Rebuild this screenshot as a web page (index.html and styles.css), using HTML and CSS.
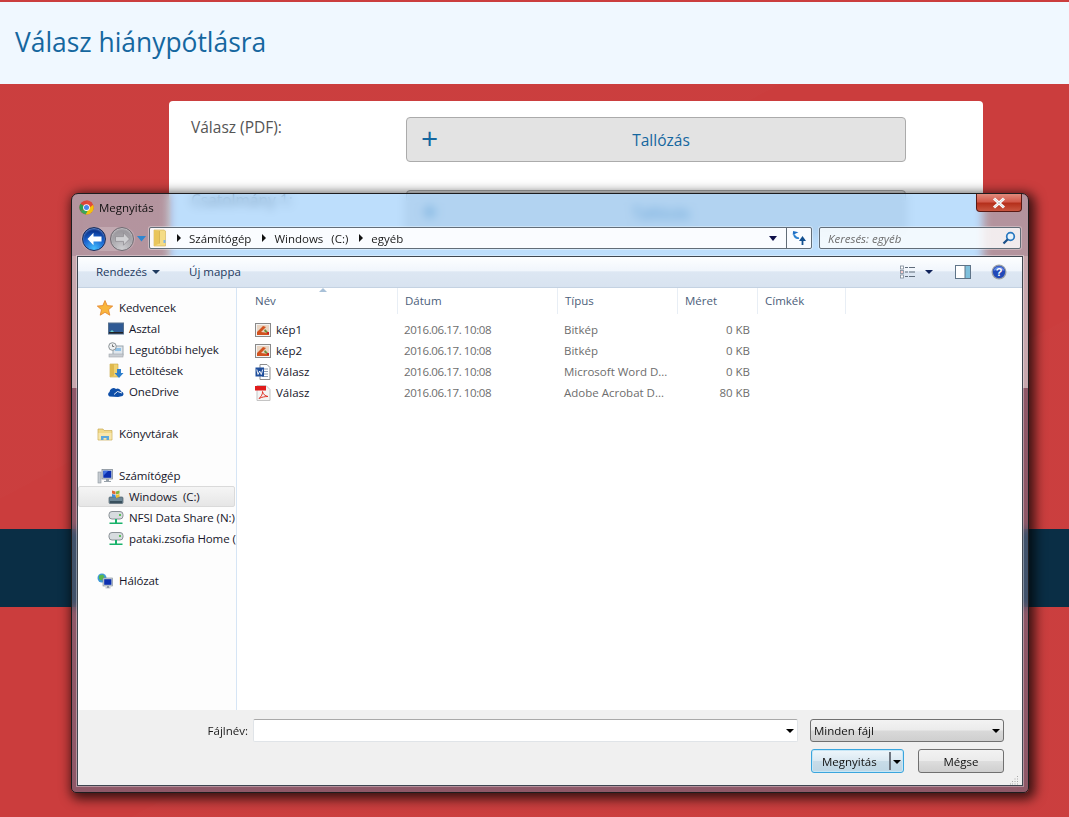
FILE: index.html
```html
<!DOCTYPE html>
<html lang="hu">
<head>
<meta charset="utf-8">
<title>Válasz hiánypótlásra</title>
<link rel="stylesheet" href="styles.css">
</head>
<body>
<header class="page-head"><h1>Válasz hiánypótlásra</h1></header>
<main class="page-main">
  <section class="card">
    <div class="form-row">
      <label class="form-label">Válasz (PDF):</label>
      <div class="browse"><span class="browse-plus">+</span><span class="browse-text">Tallózás</span></div>
    </div>
    <div class="form-row">
      <label class="form-label">Csatolmány 1:</label>
      <div class="browse"><span class="browse-plus">+</span><span class="browse-text">Tallózás</span></div>
    </div>
  </section>
  <div class="band"></div>
</main>

<div class="win">
  <div class="titlebar">
    <svg class="ico-title" viewBox="0 0 16 16"><circle cx="8" cy="8" r="7.500" fill="#db4437"/><path d="M8 8 1.500 11.800A7.500 7.500 0 0 1 1.600 4Z" fill="#2e9e4f"/><path d="M8 .5A7.500 7.500 0 0 1 14.900 11L8 8.500 8 .5Z" fill="#e04a3a"/><path d="M15 5A7.500 7.500 0 0 1 7 15.400L9 10Z" fill="#f4c20d"/><path d="M1.600 12A7.500 7.500 0 0 0 7 15.400L10 10 5 10Z" fill="#3aa757"/><circle cx="8" cy="8" r="3.600" fill="#fff"/><circle cx="8" cy="8" r="2.700" fill="#4a86e8"/></svg>
    <span class="title-text">Megnyitás</span>
    <div class="close"><svg width="16" height="12" viewBox="0 0 16 12"><path d="M3 1.500 13 10.500M13 1.500 3 10.500" stroke="#fff" stroke-width="3"/><path d="M3 1.500 13 10.500M13 1.500 3 10.500" stroke="#cfd5d8" stroke-width="1"/></svg></div>
  </div>
  <div class="navrow">
    <div class="navbtns">
      <div class="navpill">
        <div class="navbtn navbtn-back"><svg width="17" height="14" viewBox="0 0 17 14"><path d="M7.500 .8 1.500 7 7.500 13.200V9.400h8V4.600h-8Z" fill="#fff"/></svg></div>
        <div class="navbtn navbtn-fwd"><svg width="17" height="14" viewBox="0 0 17 14"><path d="M9.500 .8 15.500 7 9.500 13.200V9.400h-8V4.600h8Z" fill="#cfcfd2" stroke="#8b888e" stroke-width=".7"/></svg></div>
      </div>
      <svg class="navcaret" width="9" height="6" viewBox="0 0 9 6"><path d="M0 0h9L4.500 5.500Z" fill="#2f86d0"/></svg>
    </div>
    <div class="address">
      <svg class="addr-folder" width="14" height="18" viewBox="0 0 14 18"><path d="M1 1h10l1.500 1v15H1Z" fill="#f5dc85" stroke="#d1b050" stroke-width=".6"/><path d="M1 1v16l5.500-2.500V2Z" fill="#e9c55a"/><path d="M6.500 2v12.500" stroke="#c9a440" stroke-width=".6"/><rect x="10.500" y="11" width="2" height="3" fill="#7fb5e6"/></svg>
      <span class="crumb-arrow"></span><span class="crumb">Számítógép</span>
      <span class="crumb-arrow"></span><span class="crumb">Windows&nbsp; (C:)</span>
      <span class="crumb-arrow"></span><span class="crumb">egyéb</span>
      <span class="flex-fill"></span>
      <span class="addr-caret"></span>
      <span class="refresh"><svg width="16" height="16" viewBox="0 0 16 16"><path d="M7 1.500 2 5.500 1.500 1.500Z" fill="#1f6fc4" transform="rotate(12 4 4)"/><path d="M3 4.500C4 8 6 8.500 8 8" fill="none" stroke="#2a80d0" stroke-width="1.800"/><path d="M11.500 6 15 11H8Z" fill="#14508f"/><path d="M11.500 10v5" stroke="#14508f" stroke-width="1.800"/></svg></span>
    </div>
    <div class="search">
      <span class="search-text">Keresés: egyéb</span>
      <svg width="14" height="14" viewBox="0 0 14 14"><circle cx="8.500" cy="5.500" r="3.800" fill="#e9f3fb" stroke="#2a78c0" stroke-width="1.700"/><path d="M5.800 8.200 1.500 12.500" stroke="#1b4f88" stroke-width="2.200"/></svg>
    </div>
  </div>

  <div class="client">
    <div class="toolbar">
      <span class="tool tool-org">Rendezés<span class="caret-s"></span></span>
      <span class="tool tool-new">Új mappa</span>
      <span class="flex-fill"></span>
      <svg class="tool-view" width="16" height="14" viewBox="0 0 16 14"><g fill="#fff" stroke="#7a8796" stroke-width=".8"><rect x=".5" y="1" width="3" height="3"/><rect x=".5" y="5.500" width="3" height="3"/><rect x=".5" y="10" width="3" height="3"/></g><rect x="1.500" y="6.500" width="1" height="1" fill="#d33"/><path d="M5 2.500h3M9 2.500h6M5 7h3M9 7h6M5 11.500h3M9 11.500h6" stroke="#5f6c7b"/></svg>
      <span class="caret-view"></span>
      <svg class="tool-pane" width="16" height="14" viewBox="0 0 16 14"><rect x=".5" y=".5" width="15" height="13" fill="#fff" stroke="#5f7488"/><rect x="10" y="1" width="5" height="12" fill="#7fc0dc"/><path d="M10 1v12" stroke="#5f7488"/></svg>
      <svg class="tool-help" width="16" height="16" viewBox="0 0 16 16"><circle cx="8" cy="8" r="7.500" fill="#9aa0a8"/><circle cx="8" cy="8" r="6.200" fill="#2148b8"/><path d="M2.500 7A5.600 5.600 0 0 1 13.500 7Q8 4.500 2.500 7Z" fill="#5f84e0"/><text x="8" y="12" class="help-q">?</text></svg>
    </div>

    <div class="panes">
      <nav class="side">
        <div class="side-group">
          <div class="side-head"><svg class="ico16" viewBox="0 0 16 16"><path d="M8 .5 10.200 5.600 15.700 6.100 11.500 9.700 12.800 15.200 8 12.300 3.200 15.200 4.500 9.700.3 6.100 5.800 5.600Z" fill="#f9b63c" stroke="#e2822a" stroke-width=".8"/></svg>Kedvencek</div>
          <div class="side-item"><svg class="ico16" viewBox="0 0 16 16"><rect x=".5" y="2" width="15" height="11" fill="#2f5a94" stroke="#56708e"/><path d="M1 11h14v1.500H1Z" fill="#222"/><path d="M2 11l2-2 2 2Z" fill="#6cc"/></svg>Asztal</div>
          <div class="side-item"><svg class="ico16" viewBox="0 0 16 16"><rect x="5" y="4" width="10" height="9" fill="#dfe6ec" stroke="#9aa5ad"/><rect x="7" y="6" width="6" height="3" fill="#8fc1e6"/><rect x="1" y="12" width="14" height="3" fill="#c9ced3" stroke="#a0a6ab" stroke-width=".6"/><circle cx="4.500" cy="4.500" r="3.800" fill="#eef0f1" stroke="#8c9296"/><path d="M4.500 2.500v2h1.700" fill="none" stroke="#555" stroke-width=".8"/></svg>Legutóbbi helyek</div>
          <div class="side-item"><svg class="ico16" viewBox="0 0 16 16"><path d="M2 1h8v13H2Z" fill="#f0d271" stroke="#c6a541" stroke-width=".6"/><path d="M2 1v13l4-1.500V1Z" fill="#dfb94e"/><path d="M9 6h4v4h2.500L11 15 6.500 10H9Z" fill="#2f7fcc"/></svg>Letöltések</div>
          <div class="side-item"><svg class="ico16" viewBox="0 0 16 16"><path d="M1.500 12.500a2.500 2.500 0 0 1 0-4.500 4 4 0 0 1 6.500-3 3.500 3.500 0 0 1 5 2.500 2.500 2.500 0 0 1 1.500 4.500l-4.500 1Z" fill="#0f4fa8"/><path d="M6 10.500 9.500 7.500 14 9" fill="none" stroke="#fff" stroke-width=".9"/></svg>OneDrive</div>
        </div>
        <div class="side-group">
          <div class="side-head"><svg class="ico16" viewBox="0 0 16 16"><path d="M1 3h5l1 1.500h8V14H1Z" fill="#f0d98a" stroke="#c8ab55" stroke-width=".7"/><path d="M1.500 7h13v6.500h-13Z" fill="#f7e6ad"/><path d="M4 14V10h8v4H9.500v-2h-3v2Z" fill="#5ba8dd"/></svg>Könyvtárak</div>
        </div>
        <div class="side-group">
          <div class="side-head"><svg class="ico16" viewBox="0 0 16 16"><rect x="1" y="4" width="3" height="11" fill="#c5cbd1" stroke="#8e979f" stroke-width=".6"/><rect x="5" y="1.500" width="10.500" height="9.500" fill="#cfd6dd" stroke="#76818c" stroke-width=".7"/><rect x="6.300" y="2.800" width="8" height="7" fill="#0b2fb0"/><path d="M6.300 2.800h5l-5 5Z" fill="#3f6fe0"/><path d="M9 11h3v2h2v1H7v-1h2Z" fill="#9aa3ab"/></svg>Számítógép</div>
          <div class="side-item side-item-sel"><svg class="ico16" viewBox="0 0 16 16"><rect x="1" y="8" width="14" height="6.500" rx="1" fill="#6e8796" stroke="#4f5f6a" stroke-width=".7"/><rect x="2" y="12" width="12" height="2" fill="#39505d"/><path d="M4 1.500l3.500 1v3L4 4.500Z" fill="#df6a32"/><path d="M8 2.500l3.500-1v3l-3.500 1Z" fill="#82b440"/><path d="M4 5l3.500 1v3L4 8Z" fill="#3f8ad8"/><path d="M8 6l3.500-1v3L8 9Z" fill="#f0c030"/></svg>Windows&nbsp; (C:)</div>
          <div class="side-item"><svg class="ico16" viewBox="0 0 16 16"><rect x="1" y="1.500" width="14" height="7.500" rx="3" fill="#d7dcdf" stroke="#8b9297"/><rect x="11" y="4" width="2" height="2" fill="#5ac05a"/><path d="M7 9h2v3.500h5.500V14H1.500v-1.500H7Z" fill="#19b36b"/></svg>NFSI Data Share (N:)</div>
          <div class="side-item"><svg class="ico16" viewBox="0 0 16 16"><rect x="1" y="1.500" width="14" height="7.500" rx="3" fill="#d7dcdf" stroke="#8b9297"/><rect x="11" y="4" width="2" height="2" fill="#5ac05a"/><path d="M7 9h2v3.500h5.500V14H1.500v-1.500H7Z" fill="#19b36b"/></svg>pataki.zsofia Home (P:)</div>
        </div>
        <div class="side-group">
          <div class="side-head"><svg class="ico16" viewBox="0 0 16 16"><circle cx="5" cy="5" r="4.500" fill="#3f9ad8"/><path d="M2 2.500 6 1.500 7.500 4 4.500 7.500 2 6Z" fill="#59b84a"/><rect x="6" y="5" width="9.500" height="8" fill="#c9d2da" stroke="#7b8792" stroke-width=".6"/><rect x="7.200" y="6.200" width="7.200" height="5.600" fill="#0b2fb0"/><path d="M10 13h2v1.500h1.500v.8h-5v-.8H10Z" fill="#8f99a3"/></svg>Hálózat</div>
        </div>
      </nav>

      <section class="files">
        <div class="cols">
          <span class="col col-name">Név<i class="sort-up"></i></span>
          <span class="col col-date">Dátum</span>
          <span class="col col-type">Típus</span>
          <span class="col col-size">Méret</span>
          <span class="col col-tags">Címkék</span>
        </div>
        <div class="file-rows">
          <div class="file">
            <span class="fname"><svg class="ico16" viewBox="0 0 16 16"><rect x=".5" y="1.500" width="15" height="13" fill="#f3f3f3" stroke="#8a8a8a"/><rect x="2" y="3" width="12" height="10" fill="#e9d5c3"/><path d="M2 10 8 4l3 1-5 5 8 1v2H2Z" fill="#d2531f"/><path d="M10 7l3 3v2l-4-3Z" fill="#6b8f3a"/><rect x="12" y="10" width="2" height="2" fill="#c22"/></svg>kép1</span><span class="fdate">2016.06.17. 10:08</span><span class="ftype">Bitkép</span><span class="fsize">0 KB</span>
          </div>
          <div class="file">
            <span class="fname"><svg class="ico16" viewBox="0 0 16 16"><rect x=".5" y="1.500" width="15" height="13" fill="#f3f3f3" stroke="#8a8a8a"/><rect x="2" y="3" width="12" height="10" fill="#e9d5c3"/><path d="M2 10 8 4l3 1-5 5 8 1v2H2Z" fill="#d2531f"/><path d="M10 7l3 3v2l-4-3Z" fill="#6b8f3a"/><rect x="12" y="10" width="2" height="2" fill="#c22"/></svg>kép2</span><span class="fdate">2016.06.17. 10:08</span><span class="ftype">Bitkép</span><span class="fsize">0 KB</span>
          </div>
          <div class="file">
            <span class="fname"><svg class="ico16" viewBox="0 0 16 16"><path d="M5 .5h7l3 3v12H5Z" fill="#fff" stroke="#8d8d8d"/><path d="M9 5h4M9 7.500h4M9 10h4M7 12.500h6" stroke="#8ea0b5"/><rect x=".5" y="3.500" width="8.500" height="9" fill="#1f4e9c"/><path d="M1.800 5.500 3 10.500 4.700 7 6.300 10.500 7.700 5.500" fill="none" stroke="#fff" stroke-width=".9"/></svg>Válasz</span><span class="fdate">2016.06.17. 10:08</span><span class="ftype">Microsoft Word D...</span><span class="fsize">0 KB</span>
          </div>
          <div class="file">
            <span class="fname"><svg class="ico16" viewBox="0 0 16 16"><path d="M2 .5h9l4 4v11H2Z" fill="#f4f4f4" stroke="#c4c4c4"/><rect x="0" y="1" width="11" height="4.500" fill="#e01b1b"/><path d="M4 13.500C6 12 8 8.500 7.500 6.500 8 9 10 11 13 11.500 10 11.500 7 12 4 13.500Z" fill="none" stroke="#e0342a" stroke-width="1"/></svg>Válasz</span><span class="fdate">2016.06.17. 10:08</span><span class="ftype">Adobe Acrobat D...</span><span class="fsize">80 KB</span>
          </div>
        </div>
      </section>
    </div>

    <div class="bottom">
      <div class="bottom-row bottom-row-top">
        <label class="fname-label">Fájlnév:</label>
        <div class="fname-input"><span class="caret-b"></span></div>
        <div class="combo"><span>Minden fájl</span><span class="caret-b"></span></div>
      </div>
      <div class="bottom-row bottom-row-btns">
        <div class="btn btn-open"><span class="btn-open-text">Megnyitás</span><span class="btn-split"></span><span class="caret-b"></span></div>
        <div class="btn btn-cancel">Mégse</div>
      </div>
      <svg class="grip" width="9" height="9" viewBox="0 0 9 9"><path d="M7 0h1v1H7ZM4.500 2.500h1v1h-1ZM7 2.500h1v1H7ZM2 5h1v1H2ZM4.500 5h1v1h-1ZM7 5h1v1H7ZM0 7.500h1v1H0ZM2 7.500h1v1H2ZM4.500 7.500h1v1h-1ZM7 7.500h1v1H7Z" fill="#a9a9a9"/></svg>
    </div>
  </div>
</div>
</body>
</html>
```

FILE: styles.css
```css
* { box-sizing: border-box; }
html, body { margin: 0; height: 817px; overflow: hidden; }
body {
  position: relative;
  font-family: "Open Sans", "Noto Sans", sans-serif;
  background:
    linear-gradient(152deg, rgba(255,255,255,.008) 0 36%, transparent 36% 64%, rgba(255,255,255,.008) 64%),
    #cb3d3d;
}
.page-head {
  margin-top: 2px;
  height: 82px;
  background: #f0f8ff;
  padding: 0 0 2px 15px;
  display: flex;
  align-items: center;
}
.page-head h1 { margin: 0; font-size: 26.400px; font-weight: 400; color: #15679f; }
.page-main { padding-top: 17px; display: flex; flex-direction: column; }
.card {
  width: 814px;
  height: 400px;
  margin: 0 0 28px 169px;
  background: #fff;
  border-radius: 4px;
  padding: 16px 77px 0 22px;
  display: flex;
  flex-direction: column;
  gap: 28px;
}
.form-row { display: flex; }
.form-label { width: 215px; font-size: 15.500px; color: #555; line-height: 20px; }
.browse {
  width: 500px;
  height: 45px;
  background: #e3e3e3;
  border: 1px solid #ababab;
  border-radius: 4px;
  position: relative;
  display: flex;
  align-items: center;
  justify-content: center;
}
.browse-plus { position: absolute; left: 14px; top: 0; font-size: 30px; line-height: 40px; color: #15679f; }
.browse-text { font-size: 15.500px; color: #15679f; padding-left: 10px; }
.band { height: 78px; background: #0a2e45; }

.win {
  position: absolute;
  left: 71px;
  top: 193px;
  width: 958px;
  height: 600px;
  border: 1px solid #1d1d1f;
  border-radius: 7px 7px 5px 5px;
  box-shadow: 3px 3px 12px 3px rgba(0,0,0,.72);
  background:
    linear-gradient(90deg, rgba(164,205,222,.6) 0 97px, rgba(145,200,250,.6) 100px 905px, rgba(164,205,222,.6) 916px) top / 100% 62px no-repeat,
    linear-gradient(180deg, rgba(197,240,250,.6) 0 132px, rgba(102,107,133,.6) 132px) 0 62px / 100% 100% no-repeat;
  backdrop-filter: blur(5px);
  padding: 0 5px 6px;
  display: flex;
  flex-direction: column;
  font-size: 11.500px;
  color: #16162a;
}
.flex-fill { flex: 1; }
.ico16 { width: 16px; height: 16px; flex: none; }
.ico-title { width: 15px; height: 15px; flex: none; }
.titlebar { height: 32px; display: flex; align-items: flex-start; padding: 6px 0 0 2px; position: relative; }
.title-text { margin-left: 5px; line-height: 15px; color: #111; }
.close {
  position: absolute;
  right: 1px;
  top: 0;
  width: 46px;
  height: 18px;
  border: 1px solid #5a1a14;
  border-top: 0;
  border-radius: 0 0 4px 4px;
  background: linear-gradient(180deg, #e08a7c, #d2594a 45%, #b5301c 55%, #c9553f);
  display: flex;
  align-items: center;
  justify-content: center;
}
.navrow { height: 30px; display: flex; align-items: flex-start; }
.navbtns { width: 72px; height: 24px; margin-top: 1px; display: flex; align-items: center; }
.navpill {
  margin-left: 4px;
  padding: 0 1px;
  display: flex;
  gap: 4px;
  border-radius: 12px;
  background: rgba(255,255,255,.2);
}
.navbtn { width: 24px; height: 24px; border-radius: 50%; display: flex; align-items: center; justify-content: center; flex: none; }
.navbtn-back {
  background: radial-gradient(circle at 50% 95%, #45c0ff, #1a63cf 48%, #0b3690 75%, #0a2a70);
  border: 1px solid #1a2e5c;
  box-shadow: inset 0 1px 2px rgba(160,200,255,.7);
}
.navbtn-fwd {
  background: radial-gradient(circle at 50% 95%, #cfcfd2, #a5a3a8 55%, #8f8c92);
  border: 1px solid #6f6b72;
  box-shadow: inset 0 1px 2px rgba(255,255,255,.5);
}
.navcaret { margin-left: 2px; }
.address {
  width: 663px;
  height: 22px;
  margin-top: 1px;
  display: flex;
  align-items: center;
  padding-left: 3px;
  background: rgba(255,255,255,.93);
  border: 1px solid #626d78;
  border-radius: 2px;
  box-shadow: 0 0 0 1px rgba(255,255,255,.35);
}
.addr-folder { flex: none; margin-right: 10px; }
.crumb-arrow { width: 0; height: 0; border-left: 4px solid #111; border-top: 4px solid transparent; border-bottom: 4px solid transparent; margin-right: 8px; }
.crumb { margin-right: 11px; word-spacing: 1px; color: #1a1a1a; }
.addr-caret { width: 0; height: 0; border: 4px solid transparent; border-top: 5px solid #10104a; border-bottom: 0; margin-right: 9px; }
.refresh { width: 25px; height: 20px; border-left: 1px solid #626d78; display: flex; align-items: center; justify-content: center; }
.search {
  width: 202px;
  height: 22px;
  margin: 1px 0 0 7px;
  display: flex;
  align-items: center;
  justify-content: space-between;
  padding: 0 4px 0 8px;
  background: rgba(255,255,255,.82);
  border: 1px solid #626d78;
  border-radius: 2px;
  box-shadow: 0 0 0 1px rgba(255,255,255,.3);
}
.search-text { font-style: italic; color: #6d6d6d; }

.client {
  flex: 1;
  min-height: 0;
  background: #f0f0f0;
  border: 1px solid #3f4650;
  box-shadow: 0 0 0 1px rgba(255,255,255,.35);
  display: flex;
  flex-direction: column;
  overflow: hidden;
}
.toolbar {
  height: 31px;
  flex: none;
  display: flex;
  align-items: center;
  padding-bottom: 1px;
  background: linear-gradient(180deg, #fdfeff, #f1f6fc 45%, #dde7f3 50%, #d8e3f0);
  border-bottom: 1px solid #c4d2e2;
  color: #1e3a5f;
}
.tool-org { margin-left: 18px; display: flex; align-items: center; letter-spacing: -.05px; }
.caret-s { width: 0; height: 0; border: 4px solid transparent; border-top: 4px solid #1e3a5f; border-bottom: 0; margin-left: 5px; }
.tool-new { margin-left: 29px; }
.tool-view { margin-right: 9px; }
.caret-view { width: 0; height: 0; border: 4px solid transparent; border-top: 4px solid #10235a; border-bottom: 0; margin-right: 22px; }
.tool-pane { margin-right: 20px; }
.tool-help { margin-right: 15px; }
.help-q { font: 700 11px "Liberation Sans", sans-serif; fill: #fff; text-anchor: middle; }

.panes { height: 422px; flex: none; display: flex; background: #fff; }
.side {
  width: 159px;
  flex: none;
  padding-top: 9px;
  display: flex;
  flex-direction: column;
  gap: 21px;
  background: #fdfdfd;
  border-right: 1px solid #d6e5f5;
  overflow: hidden;
}
.side-head, .side-item {
  height: 21px;
  display: flex;
  align-items: center;
  white-space: nowrap;
  letter-spacing: -.1px;
  color: #16162a;
}
.side-head { padding-left: 19px; }
.side-head .ico16 { margin-right: 6px; }
.side-item { padding-left: 30px; }
.side-item .ico16 { margin-right: 5px; }
.side-item-sel {
  background: linear-gradient(180deg, #f5f5f5, #e6e6e6);
  border: 1px solid #dadada;
  border-radius: 2px;
  padding-left: 29px;
  margin-right: 1px;
}
.files { flex: 1; display: flex; flex-direction: column; background: #fff; }
.cols { height: 26px; display: flex; position: relative; color: #4c607a; }
.col {
  height: 26px;
  padding: 0 0 2px 7px;
  display: flex;
  align-items: center;
  border-right: 1px solid #e8eef5;
  position: relative;
}
.col-name { width: 161px; padding-left: 18px; }
.col-date { width: 160px; }
.col-type { width: 120px; }
.col-size { width: 80px; }
.col-tags { width: 88px; }
.sort-up {
  position: absolute;
  left: 82px;
  top: 0;
  width: 0;
  height: 0;
  border: 4px solid transparent;
  border-bottom: 4px solid #a9c1d8;
  border-top: 0;
}
.file-rows { padding-top: 5px; }
.file { height: 21px; display: flex; align-items: center; white-space: nowrap; color: #6d6d6d; }
.fname { width: 149px; margin-left: 18px; display: flex; align-items: center; color: #16162a; }
.fname .ico16 { margin-right: 5px; }
.fdate { width: 160px; letter-spacing: -.4px; }
.ftype { width: 120px; }
.fsize { width: 66px; text-align: right; }

.bottom { flex: 1; min-height: 0; position: relative; padding: 9px 18px 0 0; }
.bottom-row { display: flex; align-items: center; }
.bottom-row-top { height: 23px; }
.bottom-row-btns { margin-top: 7px; justify-content: flex-end; }
.fname-label { width: 175px; flex: none; text-align: right; padding-right: 5px; color: #1a1a1a; }
.fname-input {
  width: 545px;
  height: 23px;
  flex: none;
  margin-right: 12px;
  background: #fff;
  border: 1px solid #e0e4e8;
  border-top-color: #a9a9a9;
  border-radius: 2px;
  display: flex;
  align-items: center;
  justify-content: flex-end;
  padding-right: 3px;
}
.combo {
  width: 194px;
  height: 23px;
  flex: none;
  background: linear-gradient(180deg, #f3f3f3, #ebebeb 48%, #d9d9d9 52%, #cfcfcf);
  border: 1px solid #707070;
  border-radius: 3px;
  display: flex;
  align-items: center;
  justify-content: space-between;
  padding: 0 3px;
  color: #111;
}
.caret-b { width: 0; height: 0; border: 4px solid transparent; border-top: 4px solid #000; border-bottom: 0; margin-top: 1px; }
.btn {
  height: 24px;
  border-radius: 3px;
  display: flex;
  align-items: center;
  justify-content: center;
  color: #111;
}
.btn-open {
  width: 93px;
  margin-right: 14px;
  border: 1px solid #3aa5dd;
  box-shadow: inset 0 0 0 1px #c6e6f6;
  background: linear-gradient(180deg, #eef6fb, #dbe9f2 48%, #c8dce8 52%, #bfd6e4);
  justify-content: flex-start;
  padding-left: 10px;
}
.btn-open-text { width: 67px; }
.btn-split { width: 2px; height: 18px; background: #6e7680; margin-right: 2px; }
.btn-cancel {
  width: 86px;
  border: 1px solid #707070;
  background: linear-gradient(180deg, #f2f2f2, #ebebeb 48%, #dddddd 52%, #cfcfcf);
}
.grip { position: absolute; right: 3px; bottom: 0; }
```
